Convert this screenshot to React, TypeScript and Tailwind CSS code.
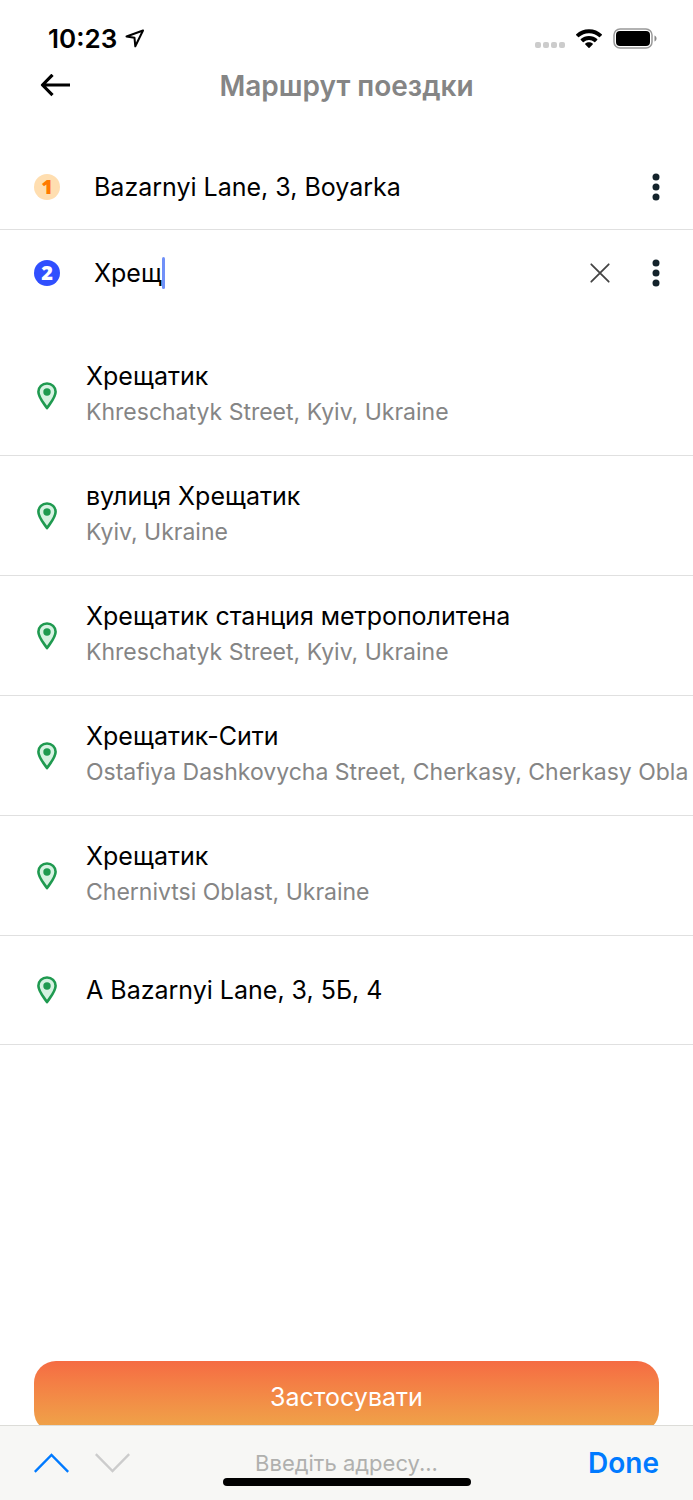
import { useState } from 'react'

interface Suggestion {
  id: number
  title: string
  subtitle?: string
}

const suggestions: Suggestion[] = [
  { id: 1, title: 'Хрещатик', subtitle: 'Khreschatyk Street, Kyiv, Ukraine' },
  { id: 2, title: 'вулиця Хрещатик', subtitle: 'Kyiv, Ukraine' },
  { id: 3, title: 'Хрещатик станция метрополитена', subtitle: 'Khreschatyk Street, Kyiv, Ukraine' },
  { id: 4, title: 'Хрещатик-Сити', subtitle: 'Ostafiya Dashkovycha Street, Cherkasy, Cherkasy Obla' },
  { id: 5, title: 'Хрещатик', subtitle: 'Chernivtsi Oblast, Ukraine' },
  { id: 6, title: 'А Bazarnyi Lane, 3, 5Б, 4' },
]

function StatusBar() {
  return (
    <div className="flex h-[61px] items-center justify-between pt-4 pr-9 pl-12">
      <div className="flex items-center gap-2">
        <span className="text-[26px] leading-8 font-semibold">10:23</span>
        <svg width="20" height="20" viewBox="0 0 20 20" fill="none" stroke="currentColor" strokeWidth="2" strokeLinejoin="round">
          <path d="M18 1.500 L1.500 7.500 L9.500 8.800 L10.300 17.300 Z" />
        </svg>
      </div>
      <div className="flex items-center gap-2.5">
        <div className="flex gap-[2px] pt-3">
          {[0, 1, 2, 3].map(i => (
            <span key={i} className="size-1.5 rounded-[2px] bg-[#cccccc]" />
          ))}
        </div>
        <svg width="28" height="22" viewBox="0 0 28 22" fill="currentColor">
          <path d="M14 1.2c5 0 9.5 1.9 12.8 5.1.3.3.3.6 0 .9l-1.900 1.900c-.3.3-.6.3-.9 0A14.300 14.300 0 0 0 14 5.200 14.300 14.300 0 0 0 4 9.100c-.3.3-.6.3-.9 0L1.200 7.200c-.3-.3-.3-.6 0-.9A18.400 18.400 0 0 1 14 1.200Z" />
          <path d="M14 7.900c3.200 0 6.100 1.200 8.200 3.200.3.3.3.6 0 .9l-2 1.900c-.3.3-.6.3-.9 0A7.800 7.800 0 0 0 14 11.900a7.800 7.800 0 0 0-5.300 2c-.3.3-.6.3-.9 0l-2-1.900c-.3-.3-.3-.6 0-.9A11.900 11.900 0 0 1 14 7.900Z" />
          <path d="M14 14.300c1.400 0 2.700.5 3.700 1.300.3.3.3.6 0 .9l-3.200 3.300c-.3.3-.7.3-1 0l-3.200-3.300c-.3-.3-.3-.6 0-.9 1-.8 2.300-1.300 3.700-1.300Z" />
        </svg>
        <svg width="44" height="21" viewBox="0 0 44 21">
          <rect x="1" y="1" width="38" height="19" rx="6" fill="none" stroke="#999" strokeWidth="1.500" />
          <rect x="3" y="3" width="34" height="15" rx="4" fill="#000" />
          <path d="M41.500 7.500c1.300.5 2 1.600 2 3s-.7 2.500-2 3Z" fill="#888" />
        </svg>
      </div>
    </div>
  )
}

function MoreButton({ label }: { label: string }) {
  return (
    <button type="button" aria-label={label} className="flex h-10 w-7 items-center justify-center">
      <svg width="8" height="28" viewBox="0 0 8 28" fill="#14232b">
        <circle cx="4" cy="4" r="3.500" />
        <circle cx="4" cy="14" r="3.500" />
        <circle cx="4" cy="24" r="3.500" />
      </svg>
    </button>
  )
}

function PinIcon() {
  return (
    <svg width="22" height="30" viewBox="0 0 22 30" className="shrink-0">
      <path
        d="M11 2.500C6.200 2.500 2.400 6.100 2.400 10.800 2.400 16.800 8.200 22.500 11 27.200 13.800 22.500 19.600 16.800 19.600 10.800 19.600 6.100 15.800 2.500 11 2.500Z"
        fill="#d5f2e1"
        stroke="#1f9a50"
        strokeWidth="2.600"
        strokeLinejoin="round"
      />
      <circle cx="11" cy="11" r="3.700" fill="#1f9a50" />
    </svg>
  )
}

export default function App() {
  const [query, setQuery] = useState('Хрещ')

  return (
    <div className="flex min-h-screen flex-col overflow-x-hidden bg-white font-['Inter','Noto_Sans',sans-serif] text-black">
      <StatusBar />

      <header className="grid h-[50px] grid-cols-[80px_1fr_80px] items-center">
        <button type="button" aria-label="Назад" className="pl-10">
          <svg width="30" height="24" viewBox="0 0 30 24" fill="none" stroke="currentColor" strokeWidth="3.200" strokeLinejoin="round">
            <path d="M30 11H2.500M12.500 .8 2.500 11l10 10.200" />
          </svg>
        </button>
        <h1 className="text-center text-[28px] leading-8 font-semibold text-[#858585]">Маршрут поездки</h1>
      </header>

      <main className="flex flex-1 flex-col">
        {/* Route points */}
        <div className="mt-[34px]">
          <div className="flex h-[85px] items-center border-b border-[#e0e0e0] pr-[23px] pl-[34px]">
            <span className="flex size-[26px] items-center justify-center rounded-full bg-[#ffdeb0] font-['Open_Sans',sans-serif] text-xl font-extrabold text-[#ff7a00]">1</span>
            <span className="ml-[34px] flex-1 text-[25px] leading-8">Bazarnyi Lane, 3, Boyarka</span>
            <MoreButton label="Опції точки 1" />
          </div>
          <div className="flex h-[85px] items-center pr-[23px] pl-[34px]">
            <span className="flex size-[26px] items-center justify-center rounded-full bg-[#304ffe] font-['Open_Sans',sans-serif] text-xl font-extrabold text-white">2</span>
            <div className="ml-[34px] flex flex-1 items-center">
              <input
                type="text"
                aria-label="Введіть адресу"
                value={query}
                onChange={e => setQuery(e.target.value)}
                className="field-sizing-content max-w-full text-[25px] leading-8 caret-[#7090f8] outline-none"
              />
              <span className="h-8 w-[3px] rounded-full bg-[#7090f8]" />
            </div>
            <button type="button" aria-label="Очистити" onClick={() => setQuery('')} className="mr-7 flex size-7 items-center justify-center">
              <svg width="20" height="20" viewBox="0 0 20 20" fill="none" stroke="#444" strokeWidth="1.800" strokeLinecap="round">
                <path d="m1.300 1.300 17.400 17.400M18.700 1.300 1.300 18.700" />
              </svg>
            </button>
            <MoreButton label="Опції точки 2" />
          </div>
        </div>

        {/* Address suggestions */}
        <ul className="mt-[21px]">
          {suggestions.map(item => (
            <li key={item.id} className="border-b border-[#e0e0e0]">
              <button
                type="button"
                onClick={() => setQuery(item.title)}
                className="flex w-full items-center gap-7 py-[22px] pl-9 text-left whitespace-nowrap"
              >
                <PinIcon />
                <span className={item.subtitle ? 'block pb-[3px]' : 'block py-[14px]'}>
                  <span className="block text-[25px] leading-9">{item.title}</span>
                  {item.subtitle && <span className="block text-[23px] leading-9 text-[#858585]">{item.subtitle}</span>}
                </span>
              </button>
            </li>
          ))}
        </ul>

        <div className="mt-auto px-[34px]">
          <button
            type="button"
            className="h-[72px] w-full rounded-[22px] bg-linear-to-b from-[#f56b43] to-[#eea749] text-[25px] leading-8 text-white"
          >
            Застосувати
          </button>
        </div>
      </main>

      {/* Keyboard accessory bar, covers the bottom edge of the button */}
      <footer className="relative -mt-2 flex h-[75px] items-center justify-between border-t border-[#dcdcd8] bg-[#f7f7f5] px-[34px]">
        <div className="flex flex-1 gap-[26px]">
          <button type="button" aria-label="Попереднє поле">
            <svg width="35" height="20" viewBox="0 0 35 20" fill="none" stroke="#007aff" strokeWidth="2.400">
              <path d="M.8 18.800 17.500 2l16.700 16.800" />
            </svg>
          </button>
          <button type="button" aria-label="Наступне поле" disabled>
            <svg width="35" height="20" viewBox="0 0 35 20" fill="none" stroke="#cccccc" strokeWidth="2.400">
              <path d="M.8 1.200 17.500 18l16.700-16.800" />
            </svg>
          </button>
        </div>
        <span className="text-[22px] leading-8 text-[#b0b0ae]">Введіть адресу...</span>
        <div className="flex flex-1 justify-end">
          <button type="button" className="text-[28px] leading-8 font-semibold text-[#007aff]">Done</button>
        </div>
        <span className="absolute bottom-3.5 left-1/2 h-2 w-[248px] -translate-x-1/2 rounded-full bg-black" />
      </footer>
    </div>
  )
}
